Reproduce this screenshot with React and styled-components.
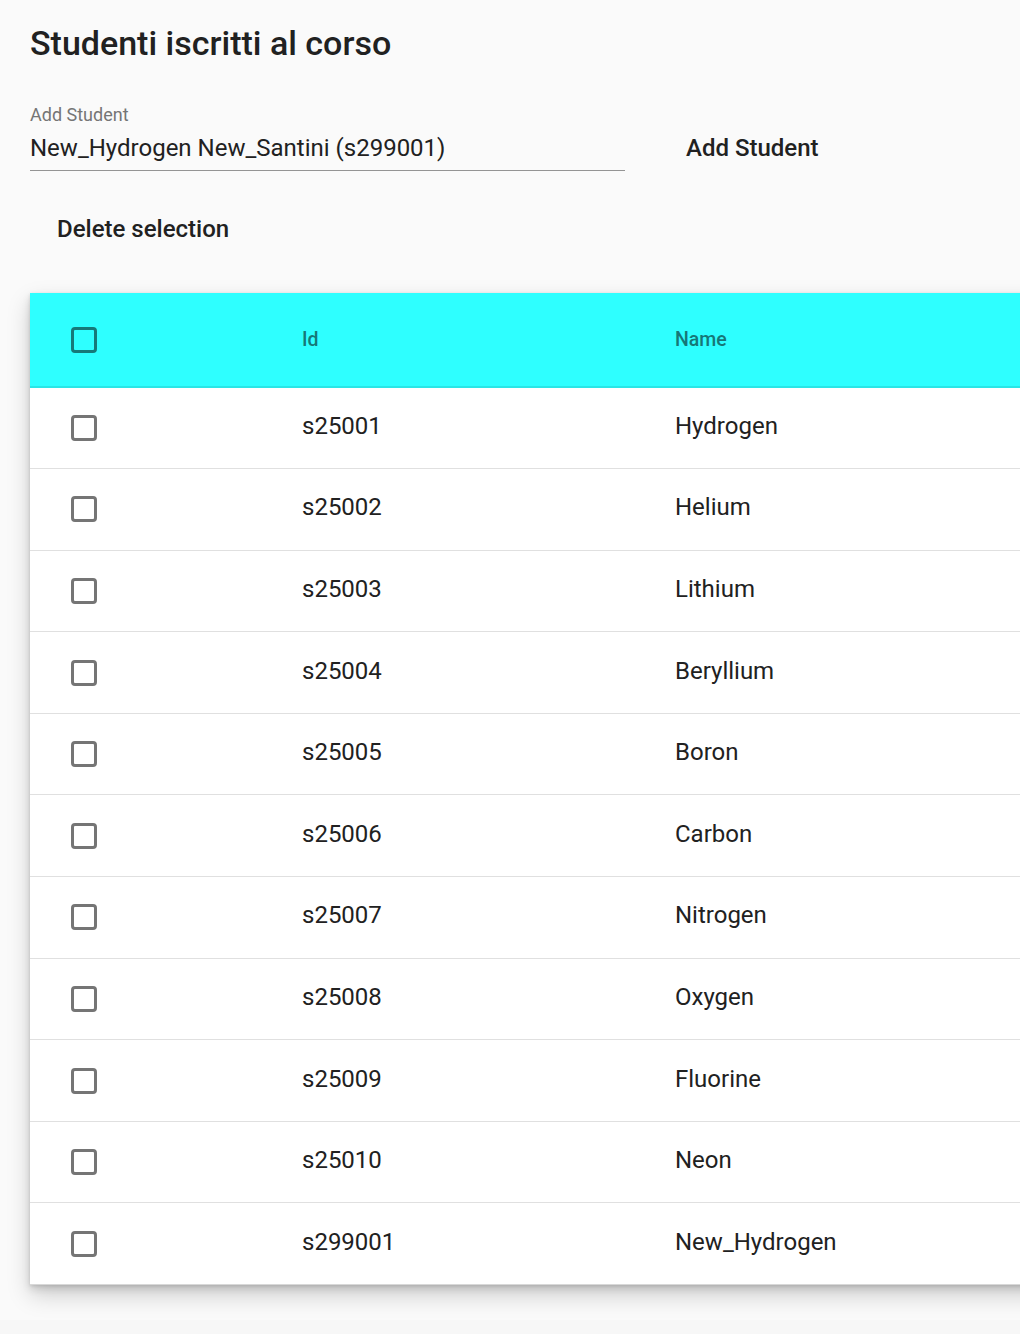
import React from "react";
import styled, { createGlobalStyle } from "styled-components";

const Global = createGlobalStyle`
  html, body { margin: 0; padding: 0; background: #f7f7f7; }
  body { font-family: Roboto, "Liberation Sans", Arial, sans-serif; overflow: hidden; }
`;

const Page = styled.div`
  background: #fafafa;
  height: 1320px;
  overflow: hidden;
  padding: 0 0 0 30px;
  box-sizing: border-box;
`;

const Title = styled.h1`
  margin: 0;
  padding-top: 22px;
  font-size: 34px;
  line-height: 42px;
  font-weight: 500;
  color: #212121;
  letter-spacing: 0;
`;

const FormRow = styled.div`
  display: flex;
  align-items: flex-end;
  margin-top: 41px;
`;

const Field = styled.label`
  display: flex;
  flex-direction: column;
  width: 595px;
  border-bottom: 1.5px solid #949494;
`;

const FieldLabel = styled.span`
  font-size: 18px;
  line-height: 20px;
  color: #757575;
`;

const FieldInput = styled.input`
  border: none;
  background: transparent;
  outline: none;
  padding: 9px 0 8px;
  margin: 0;
  font-family: inherit;
  font-size: 24px;
  line-height: 28px;
  color: #212121;
`;

const TextButton = styled.button`
  border: none;
  background: transparent;
  font-family: inherit;
  font-size: 24px;
  font-weight: 500;
  color: #212121;
  padding: 9px 12px;
  line-height: 28px;
  cursor: pointer;
  margin: ${(p) => p.$margin || "0"};
`;

const Card = styled.div`
  margin-top: 41px;
  width: 1100px;
  background: #fff;
  box-shadow: 0 10px 22px rgba(0, 0, 0, 0.18), 0 4px 8px rgba(0, 0, 0, 0.12), 0 1px 3px rgba(0, 0, 0, 0.1);
`;

const Table = styled.table`
  border-collapse: collapse;
  width: 100%;
  table-layout: fixed;
`;

const HeadRow = styled.tr`
  background: #2effff;
  height: 94px;
  border-bottom: 2px solid #29e6e6;
`;

const BodyRow = styled.tr`
  height: 81.6px;
  border-bottom: 1.5px solid #e0e0e0;
  &:last-child { border-bottom: 1.5px solid #d8d8d8; }
`;

const Th = styled.th`
  text-align: left;
  font-size: 19.5px;
  font-weight: 500;
  color: #167777;
  padding: 0;
  width: ${(p) => p.$w || "auto"};
`;

const Td = styled.td`
  font-size: 24px;
  color: #212121;
  padding: 0 0 ${(p) => (p.$text ? "4px" : "0")};
`;

const Box = styled.span`
  display: block;
  width: 26px;
  height: 26px;
  box-sizing: border-box;
  margin-left: 41px;
  border: 3px solid ${(p) => (p.$head ? "#167979" : "#757575")};
  border-radius: 4px;
`;

const rows = [
  ["s25001", "Hydrogen"],
  ["s25002", "Helium"],
  ["s25003", "Lithium"],
  ["s25004", "Beryllium"],
  ["s25005", "Boron"],
  ["s25006", "Carbon"],
  ["s25007", "Nitrogen"],
  ["s25008", "Oxygen"],
  ["s25009", "Fluorine"],
  ["s25010", "Neon"],
  ["s299001", "New_Hydrogen"],
];

export default function App() {
  return (
    <>
      <Global />
      <Page>
        <Title>Studenti iscritti al corso</Title>
        <FormRow>
          <Field>
            <FieldLabel>Add Student</FieldLabel>
            <FieldInput defaultValue="New_Hydrogen New_Santini (s299001)" />
          </Field>
          <TextButton $margin="0 0 0 49px">Add Student</TextButton>
        </FormRow>
        <TextButton $margin="35px 0 0 15px">Delete selection</TextButton>
        <Card>
          <Table>
            <thead>
              <HeadRow>
                <Th $w="272px"><Box $head /></Th>
                <Th $w="373px">Id</Th>
                <Th>Name</Th>
              </HeadRow>
            </thead>
            <tbody>
              {rows.map(([id, name]) => (
                <BodyRow key={id}>
                  <Td><Box /></Td>
                  <Td $text>{id}</Td>
                  <Td $text>{name}</Td>
                </BodyRow>
              ))}
            </tbody>
          </Table>
        </Card>
      </Page>
    </>
  );
}
